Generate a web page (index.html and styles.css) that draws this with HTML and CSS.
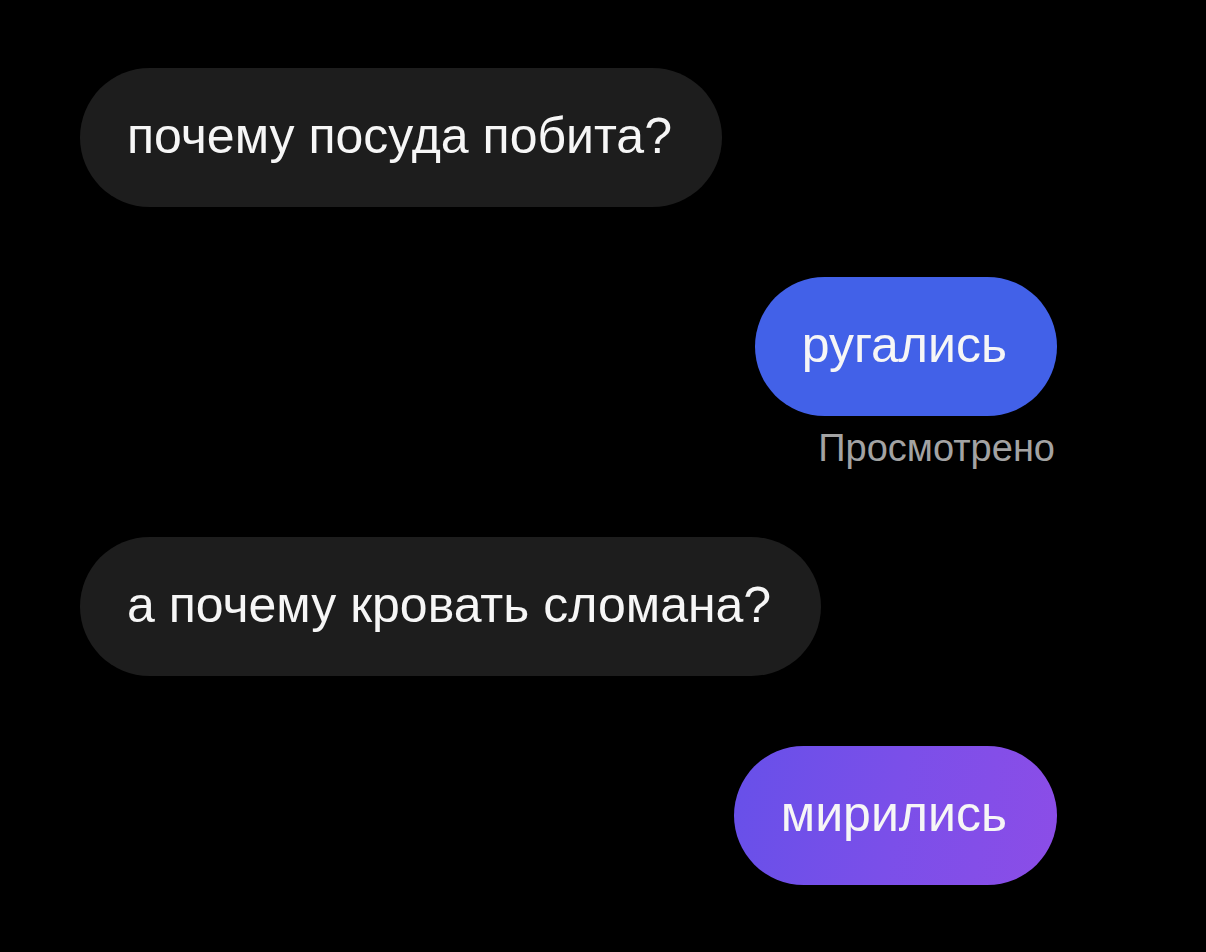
FILE: index.html
```html
<!DOCTYPE html>
<html lang="ru">
<head>
<meta charset="utf-8">
<title>Чат</title>
<link rel="stylesheet" href="styles.css">
</head>
<body>
<main class="chat">
  <div class="msg msg-in">
    <div class="bubble bubble-in">почему посуда побита?</div>
  </div>
  <div class="msg msg-out">
    <div class="bubble bubble-out">ругались</div>
    <div class="status">Просмотрено</div>
  </div>
  <div class="msg msg-in">
    <div class="bubble bubble-in">а почему кровать сломана?</div>
  </div>
  <div class="msg msg-out">
    <div class="bubble bubble-out bubble-violet">мирились</div>
  </div>
</main>
</body>
</html>
```
FILE: styles.css
```css
html, body {
  margin: 0;
  background: #000;
}

body {
  width: 1206px;
  height: 952px;
  overflow: hidden;
  font-family: "Liberation Sans", Arial, sans-serif;
}

.chat {
  display: flex;
  flex-direction: column;
  padding: 68px 149px 0 80px;
  gap: 70px;
}

.msg {
  display: flex;
  flex-direction: column;
}

.msg-in {
  align-items: flex-start;
}

.msg-out {
  align-items: flex-end;
}

.bubble {
  height: 139px;
  box-sizing: border-box;
  display: flex;
  align-items: center;
  padding: 0 50px 4px 47px;
  border-radius: 70px;
  color: #f6f6f6;
  font-size: 50px;
  white-space: nowrap;
}

.bubble-in {
  background: #1d1d1d;
}

.bubble-out {
  background: #4261e8;
}

.bubble-violet {
  background: linear-gradient(100deg, #6750e9 0%, #7b4fe9 50%, #8c4de7 100%);
}

.status {
  margin: 12px 2px -2px 0;
  color: #a3a3a3;
  font-size: 38px;
  line-height: 41px;
}
```
